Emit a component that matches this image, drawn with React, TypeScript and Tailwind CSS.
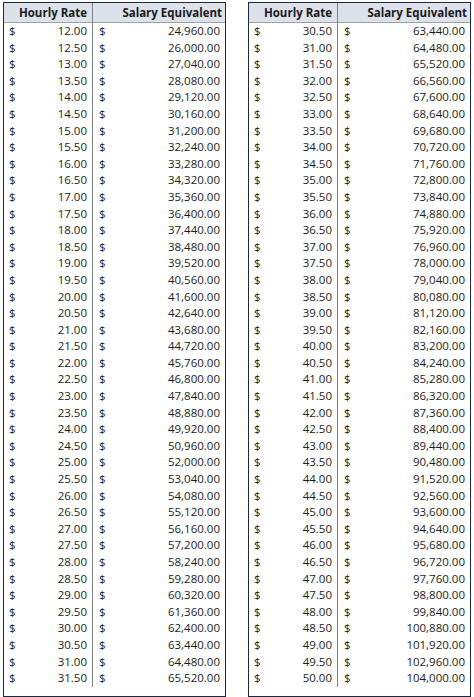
const fmt = (n: number) =>
  n.toLocaleString('en-US', { minimumFractionDigits: 2, maximumFractionDigits: 2 })

function RateTable({ start }: { start: number }) {
  const rows = Array.from({ length: 40 }, (_, i) => start + i * 0.5)
  return (
    <div className="border-[1.5px] border-[#1e2740] w-[223px]">
      <div className="grid grid-cols-[89px_1fr] h-[20px] bg-[#dde1ea] border-b border-[#9aa0ad] font-bold text-[#1a1a1a]">
        <div className="border-r border-[#7d808a] text-right pr-[5px] leading-[20px]">Hourly Rate</div>
        <div className="text-right pr-[3px] leading-[20px]">Salary Equivalent</div>
      </div>
      {rows.map((r) => (
        <div key={r} className="grid grid-cols-[89px_1fr] h-[16.6px] leading-[16.6px] text-[#1c1c1c]">
          <div className="flex justify-between border-r border-[#7d808a] pl-[5px] pr-[5px]">
            <span>$</span>
            <span>{fmt(r)}</span>
          </div>
          <div className="flex justify-between pl-[6px] pr-[5px]">
            <span>$</span>
            <span>{fmt(r * 2080)}</span>
          </div>
        </div>
      ))}
    </div>
  )
}

export default function App() {
  return (
    <div
      className="w-[474px] h-[697px] bg-white flex gap-[22px] pl-[3px] pt-[2px] text-[11.5px]"
      style={{ fontFamily: '"Open Sans", sans-serif' }}
    >
      <RateTable start={12} />
      <RateTable start={30.5} />
    </div>
  )
}
